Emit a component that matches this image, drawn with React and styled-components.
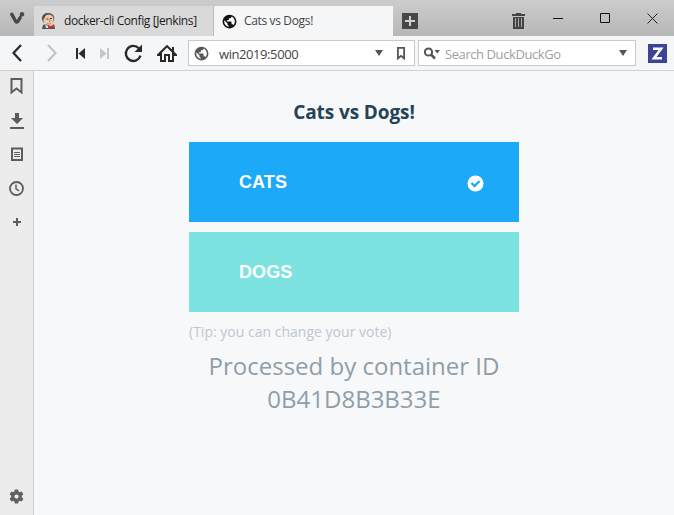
import React from "react";
import styled, { createGlobalStyle } from "styled-components";

const GlobalStyle = createGlobalStyle`
  * { box-sizing: border-box; }
  body { margin: 0; overflow: hidden; font-family: "Open Sans", "Noto Sans", sans-serif; }
  svg { display: block; flex: none; }
`;

const Window = styled.div`
  width: 674px;
  height: 515px;
  display: flex;
  flex-direction: column;
  background: #f7f8fa;
`;

const TabBar = styled.header`
  height: 36px;
  flex: none;
  display: flex;
  align-items: flex-end;
  background: linear-gradient(#cccccc, #b7b7b7);
`;

const MenuButton = styled.div`
  width: 34px;
  height: 36px;
  padding: 11px 0 0 9px;
`;

const Tab = styled.div`
  width: ${(p) => (p.$active ? 179 : 180)}px;
  height: 30px;
  padding: 0 0 0 ${(p) => (p.$active ? 8 : 7)}px;
  display: flex;
  align-items: center;
  background: ${(p) => (p.$active ? "#f5f6f7" : "#d9d9d9")};
  border-right: ${(p) => (p.$active ? "0" : "1px solid #bdbdbd")};
`;

const TabTitle = styled.span`
  margin-left: ${(p) => p.$gap}px;
  font-size: 12px;
  line-height: 16px;
  letter-spacing: ${(p) => p.$spacing}px;
  color: ${(p) => (p.$active ? "#444" : "#1c1c1c")};
  white-space: nowrap;
`;

const NewTab = styled.div`
  width: 16px;
  height: 16px;
  margin: 0 0 7px 9px;
`;

const WindowControls = styled.div`
  height: 36px;
  margin-left: auto;
  padding-right: 15px;
  display: grid;
  grid-template-columns: 41px 47px 47px 12px;
  align-items: center;
`;

const Trash = styled.div`
  margin-top: 5px;
`;

const Toolbar = styled.nav`
  height: 35px;
  flex: none;
  display: flex;
  align-items: flex-start;
  padding-top: 4px;
  background: #f5f6f7;
  border-bottom: 1px solid #cfd2d5;
`;

const NavButtons = styled.div`
  width: 188px;
  height: 26px;
  display: grid;
  grid-template-columns: 34px 36px 20px 28px 30px 38px;
  align-items: center;
  justify-items: center;
`;

const Field = styled.div`
  width: ${(p) => p.$width}px;
  height: 26px;
  margin-right: ${(p) => p.$after}px;
  padding: 0 ${(p) => p.$padRight}px 0 5px;
  display: flex;
  align-items: center;
  background: #fff;
  border: 1px solid #c8cbce;
`;

const FieldText = styled.span`
  flex: 1;
  margin-left: ${(p) => p.$gap}px;
  padding-top: 1px;
  font-size: 13px;
  line-height: 18px;
  letter-spacing: ${(p) => p.$spacing}px;
  color: ${(p) => p.$color};
  white-space: nowrap;
`;

const Extension = styled.div`
  width: 19px;
  height: 19px;
  margin-top: 4px;
  background: #3d4395;
`;

const Body = styled.div`
  flex: 1;
  display: flex;
  min-height: 0;
`;

const Sidebar = styled.aside`
  width: 34px;
  flex: none;
  display: flex;
  flex-direction: column;
  justify-content: space-between;
  align-items: center;
  padding: 0 0 10px;
  background: #ececec;
  border-right: 1px solid #cccfd2;
`;

const PanelList = styled.div`
  display: grid;
  grid-auto-rows: 34px;
  place-items: center;
  margin-top: -2px;
`;

const Page = styled.main`
  flex: 1;
  display: flex;
  flex-direction: column;
  align-items: center;
`;

const Poll = styled.section`
  width: 330px;
  padding-top: 27px;
  display: flex;
  flex-direction: column;
`;

const Title = styled.h1`
  margin: 0 0 16px;
  font-size: 19px;
  line-height: 28px;
  font-weight: 700;
  letter-spacing: -0.1px;
  text-align: center;
  color: #254356;
`;

const Choice = styled.button`
  height: 80px;
  margin: 0 0 10px;
  padding: 0 35px 0 50px;
  display: flex;
  align-items: center;
  justify-content: space-between;
  border: 0;
  background: ${(p) => p.$color};
  color: #fff;
  font: bold 18px/20px "Liberation Sans", Arial, sans-serif;
  letter-spacing: 0.1px;
`;

const CheckSlot = styled.span`
  padding-top: 3px;
`;

const Tip = styled.p`
  margin: 0;
  font-size: 14px;
  line-height: 20px;
  letter-spacing: 0.01px;
  color: #bdc7cf;
`;

const Processed = styled.p`
  margin: 7px 0 0;
  font-size: 24px;
  line-height: 33px;
  text-align: center;
  color: #8f9ea8;
`;

const Globe = ({ size, color, land = "#fff" }) => (
  <svg width={size} height={size} viewBox="0 0 24 24">
    <path
      fill={color}
      d="M12 1C5.9 1 1 5.9 1 12s4.900 11 11 11 11-4.900 11-11S18.100 1 12 1z"
    />
    <path
      fill={land}
      d="M10.800 20.400C6.700 19.900 3.500 16.300 3.500 12c0-.7.100-1.300.2-2l5.100 5.100v1.100c0 1.200.9 2.100 2 2.200zM18.400 17.700c-.3-.9-1.100-1.500-2.100-1.500h-1v-3.200c0-.6-.5-1-1-1H7.800V9.800h2.100c.6 0 1.100-.4 1.100-1V6.700h2.100c1.200 0 2.100-1 2.100-2.200v-.4c3.100 1.300 5.300 4.300 5.300 7.900 0 2.200-.8 4.200-2.100 5.700z"
    />
  </svg>
);

const JenkinsIcon = () => (
  <svg width="16" height="18" viewBox="0 0 16 18">
    <path fill="#685b53" d="M1 8C0 4 3 1 7 1c4 0 7 2 6 7l-1 3H3z" />
    <path fill="#edc9ac" d="M2.500 6c1-3 4-4 7-3 3 1 3.500 4 2.500 8-1 3-5 4-8 1-1-1-2-4-1.500-6z" />
    <path fill="#5b4a40" d="M2 4c1-2 3-3 5-3L4 4.500l-1 3-1-1z" />
    <path stroke="#4b3e38" strokeWidth="1" d="M9 6.500h2M5.500 7h2" />
    <path fill="none" stroke="#9b7862" strokeWidth=".8" d="M9 7v2l-1 1M6 11.500c2 1 3 .5 4-.5" />
    <path fill="#46565d" d="M1 17l1-4 3-1 4 3 4-2 1 4z" />
    <path fill="#dfe2e3" d="M4 12l4 3-1 1H5z" />
    <path fill="#c53839" d="M7 13l3 1 3-2 1 4-4-1-3 2z" />
  </svg>
);

const Down = () => (
  <svg width="8" height="6" viewBox="0 0 8 6">
    <path fill="#555" d="M0 0h8L4 6z" />
  </svg>
);

export default function App() {
  return (
    <>
      <GlobalStyle />
      <Window>
        <TabBar>
          <MenuButton>
            <svg width="16" height="14" viewBox="0 0 16 14">
              <path d="M2.800 3.300l4 7.200Q8 12 9.200 10L11 7" fill="none" stroke="#484848" strokeWidth="3.400" strokeLinecap="round" strokeLinejoin="round" />
              <path d="M10.500 7.500L13 3" stroke="#484848" strokeWidth="2" />
              <circle cx="13" cy="3.200" r="2.200" fill="#484848" />
            </svg>
          </MenuButton>
          <Tab>
            <JenkinsIcon />
            <TabTitle $gap={7} $spacing={-0.4}>docker-cli Config [Jenkins]</TabTitle>
          </Tab>
          <Tab $active>
            <Globe size={15} color="#111" />
            <TabTitle $active $gap={7} $spacing={-0.35}>Cats vs Dogs!</TabTitle>
          </Tab>
          <NewTab>
            <svg width="16" height="16" viewBox="0 0 16 16">
              <path fill="#474747" d="M0 0h16v16H0z" />
              <path stroke="#d0d0d0" strokeWidth="2" d="M3 8h10M8 3v10" />
            </svg>
          </NewTab>
          <WindowControls>
            <Trash>
              <svg width="13" height="16" viewBox="0 0 13 16">
                <path fill="#444" d="M4 0h5v1h4v2H0V1h4zM1 4h11v12H1z" />
                <path stroke="#aaa" d="M3.500 5v9M6.500 5v9M9.500 5v9" />
              </svg>
            </Trash>
            <svg width="11" height="11"><path stroke="#111" d="M0 5.500h10" /></svg>
            <svg width="11" height="11"><path fill="none" stroke="#111" d="M.5 .5h9v9h-9z" /></svg>
            <svg width="11" height="11"><path stroke="#222" d="M.5 .5l10 10M10.500 .5l-10 10" /></svg>
          </WindowControls>
        </TabBar>
        <Toolbar>
          <NavButtons>
            <svg width="10" height="18"><path fill="none" stroke="#282828" strokeWidth="2.200" d="M9 1L1.500 9 9 17" /></svg>
            <svg width="10" height="18"><path fill="none" stroke="#c4c4c4" strokeWidth="2.200" d="M1 1l7.500 8L1 17" /></svg>
            <svg width="9" height="11"><path fill="#2b2b2b" d="M0 0h2v11H0zM9 0v11L2.500 5.500z" /></svg>
            <svg width="9" height="11"><path fill="#c6c6c6" d="M7 0h2v11H7zM0 0v11l6.500-5.500z" /></svg>
            <svg width="19" height="19" viewBox="0 0 19 19">
              <path fill="none" stroke="#292929" strokeWidth="2.300" d="M14.800 4.300A7.500 7.500 0 1 0 16.500 11.700" />
              <path fill="#292929" d="M18 .5v7.500h-7.500z" />
            </svg>
            <svg width="20" height="19" viewBox="0 0 20 19">
              <path fill="#292929" d="M10 .8L4 6.500 0 10.500V12h3v6h6v-6h2v6h6v-6h3v-1.500l-3-2.900V3h-2v2.600zM10 3.600l5 4.800V16h-2v-6H7v6H5V8.400z" />
            </svg>
          </NavButtons>
          <Field $width={227} $after={3} $padRight={8}>
            <Globe size={15} color="#555" />
            <FieldText $gap={10} $spacing={-0.42} $color="#444">win2019:5000</FieldText>
            <Down />
            <svg width="23" height="13" viewBox="-14 0 23 13">
              <path fill="none" stroke="#555" strokeWidth="1.800" d="M.9 .9h6.200v10.500L4 8.800 .9 11.400z" />
            </svg>
          </Field>
          <Field $width={218} $after={12} $padRight={8}>
            <svg width="16" height="13" viewBox="0 0 16 13">
              <circle cx="4.500" cy="5" r="3.600" fill="none" stroke="#555" strokeWidth="2" />
              <path stroke="#555" strokeWidth="2.500" d="M7 7.500l4 4" />
              <path fill="#555" d="M10.500 3H16l-2.700 3.500z" />
            </svg>
            <FieldText $gap={5} $spacing={-0.42} $color="#9da0a2">Search DuckDuckGo</FieldText>
            <Down />
          </Field>
          <Extension>
            <svg width="19" height="19"><path fill="none" stroke="#fff" strokeWidth="2.600" d="M5 4.800h8L6 14.200h8" /></svg>
          </Extension>
        </Toolbar>
        <Body>
          <Sidebar>
            <PanelList>
              <svg width="13" height="17"><path fill="none" stroke="#5c5c5c" strokeWidth="2" d="M1.500 1h10v13.500l-5-4-5 4z" /></svg>
              <svg width="14" height="17"><path fill="#5c5c5c" d="M5 1h4v5h4l-6 6-6-6h4zM0 15h14v2H0z" /></svg>
              <svg width="12" height="14">
                <path fill="none" stroke="#5c5c5c" strokeWidth="2" d="M1 1.500h10V13H1z" />
                <path stroke="#5c5c5c" d="M3 5.500h6M3 7.500h6M3 9.500h6" />
              </svg>
              <svg width="15" height="15">
                <circle cx="7.500" cy="7.500" r="6.500" fill="none" stroke="#5c5c5c" strokeWidth="1.800" />
                <path fill="none" stroke="#5c5c5c" strokeWidth="1.500" d="M7 3.500v4.300l3 2" />
              </svg>
              <svg width="8" height="8"><path stroke="#5c5c5c" strokeWidth="2" d="M0 4h8M4 0v8" /></svg>
            </PanelList>
            <svg width="17" height="17" viewBox="0 0 24 24">
              <path fill="#606060" d="M19.400 13c0-.3.100-.6.100-1s0-.7-.1-1l2.100-1.700c.2-.1.200-.4.100-.6l-2-3.500c-.1-.2-.4-.3-.6-.2l-2.500 1c-.5-.4-1.100-.7-1.700-1l-.4-2.600c0-.2-.2-.4-.5-.4h-4c-.2 0-.5.200-.5.400L9.100 5c-.6.300-1.200.6-1.700 1L5 5c-.2-.1-.5 0-.6.200l-2 3.500c-.1.200-.1.500.1.600L4.600 11c0 .3-.1.700-.1 1s0 .7.100 1l-2.100 1.700c-.2.100-.2.400-.1.600l2 3.500c.1.200.4.300.6.200l2.400-1c.5.400 1.100.7 1.700 1l.4 2.600c0 .2.300.4.500.4h4c.3 0 .5-.2.500-.4l.4-2.600c.6-.3 1.200-.6 1.700-1l2.500 1c.2.100.5 0 .6-.2l2-3.500c.1-.2.100-.5-.1-.6zM12 15a3 3 0 1 1 0-6 3 3 0 0 1 0 6z" />
            </svg>
          </Sidebar>
          <Page>
            <Poll>
              <Title>Cats vs Dogs!</Title>
              <Choice $color="#1caaf8">
                CATS
                <CheckSlot>
                  <svg width="17" height="17" viewBox="0 0 17 17">
                    <circle cx="8.500" cy="8.500" r="8" fill="#fff" />
                    <path fill="none" stroke="#1caaf8" strokeWidth="2.300" d="M4.500 8l3 3 5-5" />
                  </svg>
                </CheckSlot>
              </Choice>
              <Choice $color="#7ce3e0">DOGS</Choice>
              <Tip>(Tip: you can change your vote)</Tip>
              <Processed>Processed by container ID 0B41D8B3B33E</Processed>
            </Poll>
          </Page>
        </Body>
      </Window>
    </>
  );
}
